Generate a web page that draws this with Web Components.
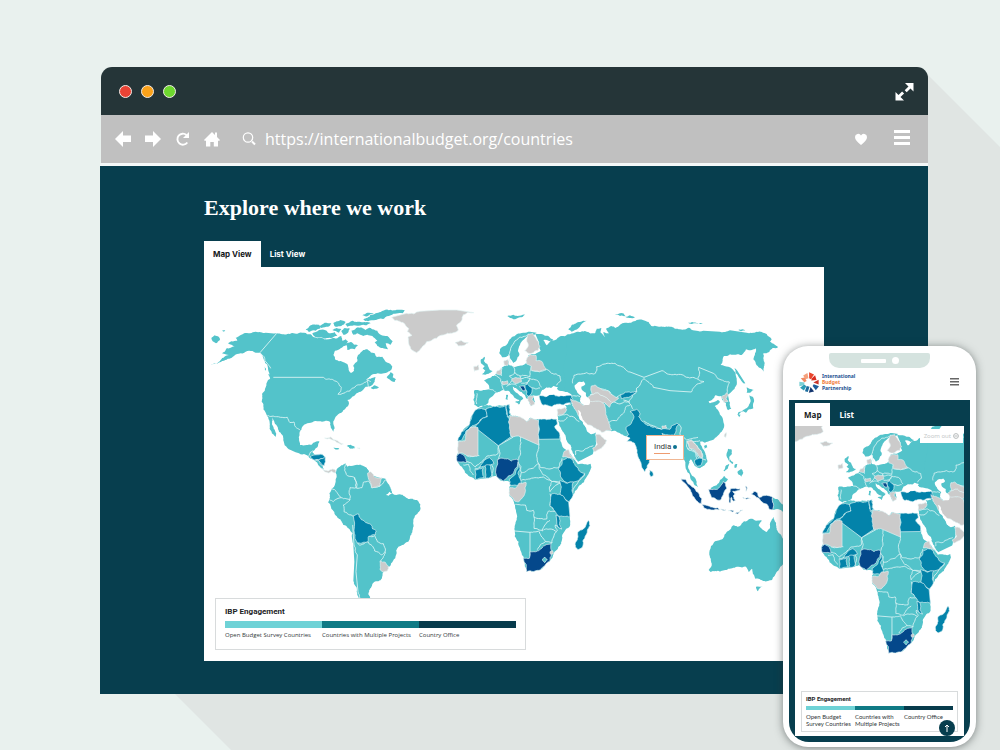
<!DOCTYPE html>
<html lang="en">
<head>
<meta charset="utf-8">
<title>Explore where we work</title>
<style>
  html, body { margin: 0; min-height: 100%; }
  body { background: #e9f1ee; font-family: Inter, "Open Sans", sans-serif; color: #1b2426; }
</style>
</head>
<body>
<desktop-scene>
  <browser-window url="https://internationalbudget.org/countries">
    <explore-section></explore-section>
  </browser-window>
  <phone-frame slot="phone"></phone-frame>
</desktop-scene>

<script>
/* ---------- map data: each region lists its points in its own grid (3 units per map unit) ---------- */
const TEAL = '#53c3ca', GREY = '#cbcbcb', BLUE = '#0383aa', NAVY = '#04488b';
const REGIONS = [
  { at: [204, 300], land: [
    [TEAL, '218,100 235,103 250,102 265,99 280,101 300,98 320,103 330,112 350,113 375,118 400,115 412,108 415,122 425,118 432,124 428,135 410,145 393,152 388,165 395,180 415,185 430,192 434,210 441,219 450,212 448,196 460,184 462,165 478,150 490,148 500,157 512,160 518,172 535,170 545,185 565,200 558,213 540,220 510,222 488,238 468,250 500,236 515,232 512,245 500,258 485,260 470,275 455,283 442,294 430,300 435,310 425,325 412,338 395,350 388,364 392,385 388,395 380,382 378,366 365,362 350,364 330,364 310,370 295,380 287,395 285,420 290,440 305,447 320,443 328,428 346,424 342,438 332,450 325,455 335,465 345,463 360,465 360,480 355,496 360,510 352,504 340,488 330,478 318,475 300,462 280,458 260,450 242,436 238,415 225,395 212,370 204,352 207,378 216,410 206,402 197,378 188,345 178,328 173,305 175,280 185,262 192,240 200,235 194,215 190,195 180,180 170,160 150,156 130,153 110,160 90,168 60,182 20,195 50,180 75,165 54,160 68,145 92,140 72,130 82,124 100,122 95,113 120,100 155,95 185,98'],
    [TEAL, '22,114 32,106 44,110 48,120 36,130 26,124'],[TEAL, '54,92 64,91 60,95'],
    [TEAL, '305,88 320,76 345,74 350,84 335,92 315,96'],
    [TEAL, '325,100 345,90 368,92 375,100 392,96 400,108 380,114 350,112 330,108'],
    [TEAL, '345,78 362,68 382,70 372,80 352,84'],[TEAL, '388,70 410,60 425,66 412,78 395,80'],
    [TEAL, '385,90 398,84 412,88 405,98'],[TEAL, '412,94 422,84 438,86 432,98 418,104'],
    [TEAL, '424,72 445,62 470,66 500,70 488,76 450,76 430,80'],
    [TEAL, '478,58 500,44 530,36 570,31 602,30 596,40 560,46 540,56 515,60 492,64'],
    [TEAL, '475,46 490,38 510,40 492,48'],
    [TEAL, '442,92 462,82 485,90 500,84 520,92 530,104 550,108 566,124 560,134 545,130 552,148 536,144 520,138 512,128 520,122 505,108 490,104 478,108 460,100 448,104'],
    [TEAL, '425,132 440,126 462,136 452,148 440,146 430,150'],
    [TEAL, '548,232 560,216 568,222 566,232 576,238 572,246 556,238'],
    [TEAL, '500,264 512,256 525,262 508,268'],
    [TEAL, '182,178 188,186 186,192'],[TEAL, '180,198 186,206 184,212'],
    [TEAL, '192,222 206,232 208,240 198,236'],
    [TEAL, '404,508 412,496 424,490 430,500 452,496 480,500 492,510 490,530 404,530'],
    [GREY, '362,414 380,411 400,422 418,432 412,434 395,424 378,416'],
    [TEAL, '428,438 440,434 454,442 440,446'],[TEAL, '395,444 406,445 402,449'],[GREY, '460,444 468,444 466,447'],
    [BLUE, '328,474 338,464 354,462 362,470 359,498 350,494 344,482 336,480']
  ], lines: ['218,100 168,158 180,170 190,190 200,205', '208,232 358,232 364,237 388,240 404,250 412,262 410,275 402,283 425,276 448,264 470,254 492,240 500,246', '492,240 496,262', '190,347 218,350 240,353 250,352 258,368 270,366 278,384 290,392', '312,472 318,458 326,452', '336,478 358,470'] },

  { at: [380, 300], land: [
    [GREY, '35,52 80,40 120,34 180,30 230,30 282,38 250,44 246,60 230,75 235,90 215,100 190,105 170,115 140,125 125,143 110,158 95,150 86,130 84,112 96,106 82,95 86,85 70,68 45,62'],
    [GREY, '225,128 245,122 265,128 255,135 235,138'],
    [TEAL, '358,160 360,148 375,138 385,125 395,112 410,103 430,98 450,95 470,98 460,106 446,104 434,116 420,135 414,152 418,165 410,180 400,189 390,175 388,165 366,172'],
    [TEAL, '466,102 480,102 505,108 520,118 508,124 490,120 500,136 512,122 530,118 545,108 580,108 610,102 610,300 585,300 560,280 540,276 525,262 500,264 486,272 480,284 460,286 465,305 455,318 446,300 436,288 425,276 410,266 398,260 404,274 420,287 430,294 425,300 416,314 418,300 400,287 385,272 370,270 355,276 345,280 330,294 325,308 310,318 295,322 283,315 280,300 284,285 282,272 310,270 328,268 326,255 312,242 330,234 345,226 352,218 365,204 378,197 378,180 386,184 388,196 400,200 430,195 440,188 446,176 446,165 465,163 482,152'],
    [TEAL, '382,48 400,44 412,48 435,44 420,52 400,58'],
    [TEAL, '565,88 575,75 600,66 620,62 602,76 585,90 575,95'],
    [TEAL, '303,178 314,170 312,184 322,192 328,208 338,213 326,221 306,223 316,212 308,205 314,198 303,190'],
    [GREY, '281,200 296,195 297,209 283,214'],[TEAL, '405,306 422,302 418,313'],[TEAL, '378,284 384,284 383,300 377,298'],
    [GREY, '434,152 444,140 440,120 444,104 458,100 468,115 480,140 474,152 455,160 442,158'],
    [GREY, '372,182 384,178 384,196 374,196'],
    [GREY, '438,182 450,164 468,166 468,182 485,184 498,210 478,216 455,212 454,198 440,192'],
    [GREY, '352,212 366,204 362,224 348,220'],[GREY, '366,244 382,242 384,252 368,254'],
    [GREY, '395,238 422,234 424,246 404,250'],[GREY, '444,290 462,288 456,298 464,312 452,318 444,302'],
    [NAVY, '418,260 432,258 436,272 426,270'],[BLUE, '434,256 442,252 454,262 456,276 448,290 440,284 438,270'],
    [BLUE, '478,286 496,290 520,283 550,288 574,286 578,310 550,315 530,313 515,320 488,315 480,300']
  ], sea: ['484,282 486,270 500,262 512,268 520,258 534,262 530,268 556,276 576,286 552,288 530,282 500,290'],
     lines: ['392,188 386,165 392,145 402,128 418,112 446,102', '291,280 290,312', '328,268 350,278', '345,226 362,238 366,258 372,270', '362,204 364,228', '400,200 404,220 388,228 398,238', '404,218 420,228 450,230 454,200', '398,240 385,256', '420,228 424,236 445,234 450,236 442,248 424,250', '450,236 470,240 484,262', '456,212 480,214 500,208 515,220 540,228 542,242 530,256', '452,262 480,264', '380,260 394,252 410,256', '440,252 448,240'] },

  { at: [570, 300], land: [
    [TEAL, '-10,104 10,100 25,95 50,95 75,100 80,86 94,84 92,98 104,112 100,96 118,100 108,86 124,78 136,84 150,74 165,68 200,60 236,66 244,78 270,80 300,80 330,88 360,84 400,92 450,95 480,91 530,98 560,95 590,102 605,118 600,125 624,142 608,144 598,156 580,160 584,190 580,215 560,196 550,178 555,160 558,145 546,150 528,148 515,165 480,163 462,168 452,195 475,200 490,210 500,235 498,258 486,274 474,286 480,308 484,326 474,331 468,310 456,298 452,288 436,286 426,300 416,304 420,310 444,300 450,306 434,318 446,334 456,350 462,372 455,395 440,410 420,422 405,428 390,425 380,440 394,455 408,475 405,495 390,505 378,500 370,490 362,478 352,490 350,500 342,470 328,450 325,420 300,405 200,415 165,408 150,400 125,394 80,385 30,355 0,310 -20,300'],
    [TEAL, '135,42 160,40 166,48 150,48'],[TEAL, '165,50 180,46 195,52 178,54'],[TEAL, '350,68 366,66 385,70 400,68 392,72 366,72'],[TEAL, '505,90 518,88 526,91 514,94'],
    [TEAL, '494,204 502,212 526,250 520,250 508,234 498,220'],
    [TEAL, '530,262 538,266 552,270 540,278 530,278'],[TEAL, '538,286 548,290 552,305 550,325 538,328 528,338 520,334 504,346 506,336 524,328 536,318 542,304'],[TEAL, '502,342 512,344 508,352'],
    [TEAL, '402,438 410,434 412,442 404,446'],[GREY, '464,402 470,398 468,412 463,410'],
    [GREY, '454,290 470,278 476,284 468,296 474,304 462,308'],
    [GREY, '64,258 75,255 92,266 114,272 122,282 138,292 146,294 126,308 118,322 104,308 84,304 60,306 54,292 66,282'],
    [GREY, '2,296 22,305 40,316 62,304 82,304 104,314 108,345 114,362 125,390 95,397 74,384 62,376 45,376 30,356 20,335 8,318'],
    [GREY, '352,424 364,420 378,434 392,452 398,472 386,466 374,444 360,444'],
    [GREY, '276,378 288,376 290,384 278,386'],
    [BLUE, '152,284 166,276 198,274 190,284 170,292 154,296'],
    [BLUE, '165,410 176,404 168,382 184,370 192,350 180,335 200,328 210,340 206,350 220,366 244,380 274,388 300,388 304,378 320,370 326,374 318,386 312,406 290,404 276,400 280,410 262,420 248,440 240,458 238,488 224,516 214,496 202,462 194,430 182,424 170,424 180,414']
  ], sea: ['14,256 26,246 40,244 46,252 34,260 36,270 48,278 48,288 60,300 58,314 42,316 30,302 34,288 20,272'],
     lines: ['8,250 12,226 50,218 76,220 80,200 116,190 152,198 180,216 222,232', '222,232 276,212 310,224 350,232 384,238 402,245 372,262 364,276 300,272 250,262 222,236', '384,236 386,202 430,220 450,238 478,246 472,278', '222,236 200,264 200,276 186,292 178,305', '66,258 92,266 120,276 138,294 152,284', '104,312 130,306 150,312 176,304 182,314', '110,370 140,362 160,340 170,318 182,314 190,328', '178,308 160,300', '326,372 334,384 330,408 350,420 384,412', '350,424 356,450 380,460 388,476', '0,285 30,290'],
     top: ['222,362 246,376 274,388', '60,284 84,278 104,290 124,306'] },

  { at: [300, 445], land: [
    [TEAL, '106,82 118,66 136,57 142,66 165,66 200,68 210,84 240,98 258,102 268,120 278,146 300,148 325,162 350,165 361,178 357,200 340,225 337,262 325,290 295,305 288,330 270,364 248,384 246,400 222,412 214,426 205,448 212,462 205,475 178,475 170,440 160,408 163,350 160,300 158,265 130,240 115,220 98,195 84,172 90,158 88,145 97,130 107,110'],
    [GREY, '203,84 212,80 226,98 246,98 240,122 214,128 210,108'],
    [GREY, '240,348 256,352 266,364 262,378 246,380 240,374'],
    [GREY, '64,70 74,76 86,78 98,72 108,78 104,84 94,78 86,84 74,80'],
    [TEAL, '20,0 48,0 42,12 30,20 40,28 40,34 30,32 10,26 0,20 0,0'],
    [BLUE, '30,36 42,30 62,28 76,36 73,62 64,58 54,44 40,44'],
    [TEAL, '54,50 66,60 70,72 60,66'],[TEAL, '100,8 114,10 108,14'],[TEAL, '145,0 160,4 165,10 148,10'],
    [BLUE, '160,212 176,207 184,224 212,238 218,252 229,258 226,270 206,274 204,290 190,292 172,294 162,256']
  ], sea: ['258,150 268,140 278,146 266,152'],
     lines: ['136,58 134,76 142,92 164,98 168,128 150,128 150,165 124,158 104,134 94,130', '164,98 170,130 186,128 190,112 206,108', '150,165 130,180 132,200 160,214', '124,158 100,170 88,164', '158,240 162,300 172,330 168,380 174,440 180,460', '206,274 224,272 232,290 250,296 256,318 244,330 224,318 204,290', '172,292 178,300 204,290', '256,320 242,348', '206,108 216,128 240,124 258,104'],
     top: ['46,44 60,42 74,38'] },

  { at: [450, 395], land: [
    [TEAL, '82,42 100,32 130,35 165,30 180,32 182,60 205,65 232,80 242,68 262,72 290,74 320,72 318,90 314,94 330,124 336,150 350,166 375,196 383,208 422,206 424,218 412,242 385,275 366,302 356,322 360,368 358,396 336,424 330,452 312,474 300,498 272,524 230,530 222,500 210,460 194,424 193,402 200,370 195,330 178,303 178,275 185,265 172,258 150,256 136,242 120,248 75,254 55,242 38,220 22,200 20,185 25,160 25,140 35,115 60,88 66,60'],
    [TEAL, '322,60 350,40 345,30 372,28 382,48 396,72 404,90 412,110 425,118 436,112 444,130 436,152 428,178 384,200 372,178 362,150 346,120 328,92'],
    [BLUE, '82,42 94,40 108,44 112,62 90,75 75,90 60,98 48,108 34,136 22,138 34,112 58,88 66,62'],
    [BLUE, '108,42 130,34 168,32 170,58 180,80 186,100 183,125 145,152 75,97 90,78 112,65'],
    [BLUE, '168,32 178,28 180,42 178,54 182,58 172,66'],
    [GREY, '180,62 205,65 230,80 242,68 266,78 266,150 210,125 186,126 178,100'],
    [BLUE, '266,72 290,74 318,72 322,88 314,94 330,132 267,133'],
    [GREY, '60,98 84,98 84,182 50,182 36,174 24,178 25,140 45,138 50,110'],
    [NAVY, '20,184 30,174 44,184 50,202 22,200'],
    [BLUE, '90,216 100,200 118,188 132,206 112,212'],[BLUE, '75,224 100,218 102,248 78,254'],[BLUE, '105,212 120,210 123,245 106,250'],[TEAL, '130,200 140,210 138,242 128,244'],
    [NAVY, '142,194 160,190 184,198 204,194 202,214 190,236 174,244 160,258 140,244'],
    [BLUE, '204,202 210,220 204,236 212,256 218,272 180,270 178,252 196,236'],
    [GREY, '180,278 196,280 208,264 228,262 226,290 206,320 194,318 178,298'],
    [GREY, '338,186 344,168 356,164 378,196 360,188'],
    [BLUE, '326,224 336,196 352,188 368,194 376,212 388,228 404,235 386,256 352,264 332,246'],
    [BLUE, '328,258 340,260 352,265 370,260 366,288 369,302 358,320 330,298 334,276'],
    [BLUE, '304,298 330,298 356,322 360,366 326,364 300,334'],[BLUE, '318,360 326,364 328,388 334,402 324,396'],
    [NAVY, '220,490 238,490 240,470 262,468 284,452 304,445 308,474 300,496 272,524 230,530'],
    [TEAL, '276,494 284,486 292,494 284,503'],[GREY, '300,470 308,467 310,476 302,478'],
    [BLUE, '415,376 420,392 408,420 396,458 384,464 376,456 378,440 384,426 384,410 400,402'],
    [GREY, '322,42 345,36 350,44 340,58 322,62'],
    [GREY, '436,118 452,120 470,136 460,154 432,170 428,160 442,148']
  ], sea: ['383,45 392,52 404,80 420,100 436,102 440,110 424,118 414,110 404,92 388,70'],
     lines: ['84,98 145,152 190,126', '145,152 144,176 110,184 88,206', '145,152 150,174 146,192', '212,126 210,160 206,194', '266,132 264,168 260,184 266,206 238,222 214,232', '204,200 214,232 210,254', '266,206 272,218 300,222 326,218 336,190', '266,206 280,240 300,256 330,262', '212,256 240,252 280,246 304,258', '304,262 300,290 330,264 ', '300,296 300,330 316,350', '50,182 88,182', '50,200 76,216 88,206', '40,210 56,208 60,226 70,240', '196,328 226,330 230,346 250,346 252,366 290,372 296,348 320,352', '252,366 252,400 276,406 300,376', '193,408 240,412 268,408', '240,412 240,490', '268,410 286,440 306,444 320,410 300,402 276,408', '322,408 316,390 336,402', '286,440 262,464', '322,62 350,58 388,80', '322,76 340,78 352,66', '376,180 376,168 400,168 430,152', '330,264 304,260', '404,236 384,262 366,300', '90,216 74,222', '124,208 126,244'] },

  { at: [600, 400], land: [
    [TEAL, '252,150 262,160 276,168 290,180 305,200 322,186 316,160 306,140 300,125 262,120'],
    [TEAL, '255,160 268,176 264,200 272,220 288,240 294,262 284,256 272,238 262,216 256,196'],
    [GREY, '262,124 278,124 292,140 306,164 306,174 294,166 284,150 268,144'],
    [BLUE, '284,180 308,176 304,194 290,199'],
    [BLUE, '149,210 158,216 160,226 153,231 148,222'],
    [NAVY, '243,236 256,238 284,266 296,280 306,296 304,312 292,304 276,282 262,258'],
    [NAVY, '306,314 326,318 352,323 358,330 336,330 312,324'],[NAVY, '362,327 378,329 372,332'],[NAVY, '385,332 402,333 398,336'],[NAVY, '406,340 422,330 428,330 412,342'],
    [TEAL, '332,264 350,256 360,240 372,228 384,238 374,248 364,260 350,270 334,270'],
    [NAVY, '326,268 340,268 352,268 366,252 370,244 376,250 380,266 370,284 362,300 348,298 334,292'],
    [NAVY, '386,282 392,266 420,266 420,270 398,274 406,282 400,288 406,302 400,304 394,292 392,308 387,308'],
    [NAVY, '436,258 442,264 438,274'],[NAVY, '428,293 440,294 452,296 440,298'],[NAVY, '454,282 462,274 472,278 478,292 500,286 518,292 518,330 508,328 500,312 484,304 476,294 462,286'],
    [TEAL, '518,292 536,300 550,314 566,330 550,336 536,328 518,330'],
    [TEAL, '384,146 394,148 396,162 388,170 386,182 380,160'],[TEAL, '390,178 400,188 398,192 388,184'],[TEAL, '404,194 412,192 410,202 404,204'],[TEAL, '370,212 386,192 388,194 374,214'],[TEAL, '412,216 424,206 430,218 424,230 414,222'],
    [TEAL, '333,438 345,424 370,414 380,396 400,376 412,380 420,378 432,364 452,356 470,362 486,362 476,376 500,396 510,384 514,362 521,350 528,368 534,396 546,412 560,430 566,460 552,488 532,514 516,540 490,543 466,536 458,520 456,506 446,516 438,500 415,500 385,506 360,515 332,516 326,510 335,490 328,465'],
    [TEAL, '468,560 488,559 474,574']
  ], lines: ['262,124 278,126 300,122', '306,174 318,180', '262,146 282,152 290,176'] }
];

/* Midpoint displacement: gives coasts and borders a natural ragged edge, the same for both sides of a shared edge. */
function noise(a, b) {
  const s = Math.sin((a[0] + b[0]) * 12.9898 + (a[1] + b[1]) * 78.233) * 43758.5453;
  return s - Math.floor(s) - 0.5;
}
function rough(a, b, depth) {
  const dx = b[0] - a[0], dy = b[1] - a[1];
  if (depth === 0 || Math.hypot(dx, dy) < 6) return [b];
  const swap = dx < 0 || (dx === 0 && dy < 0) ? -1 : 1;
  const n = noise(a, b) * 0.26 * swap;
  const m = [(a[0] + b[0]) / 2 - dy * n, (a[1] + b[1]) / 2 + dx * n];
  return [...rough(a, m, depth - 1), ...rough(m, b, depth - 1)];
}
function toPath(list, closed) {
  const pts = list.trim().split(/\s+/).map(p => p.split(',').map(Number));
  const out = [pts[0]];
  for (let i = 1; i < pts.length; i++) {
    const straight = Math.hypot(pts[i][0] - pts[i - 1][0], pts[i][1] - pts[i - 1][1]) > 44;
    out.push(...rough(pts[i - 1], pts[i], straight ? 0 : 3));
  }
  if (closed) out.push(...rough(pts[pts.length - 1], pts[0], 2));
  return 'M' + out.map(p => p[0].toFixed(1) + ' ' + p[1].toFixed(1)).join('L') + (closed ? 'Z' : '');
}
function mapMarkup() {
  const g = (r, inner) => `<g transform="translate(${r.at}) scale(.33333)">${inner}</g>`;
  const border = l => `<path class="l" d="${toPath(l, false)}"/>`;
  let base = '', sea = '', over = '', lines = '', top = '';
  for (const r of REGIONS) {
    base += g(r, r.land.filter(l => l[0] === TEAL).map(l => `<path fill="${l[0]}" d="${toPath(l[1], true)}"/>`).join(''));
    over += g(r, r.land.filter(l => l[0] !== TEAL || l[1].startsWith('276,494')).map(l => `<path class="c" fill="${l[0]}" d="${toPath(l[1], true)}"/>`).join(''));
    sea += g(r, (r.sea || []).map(l => `<path fill="#fff" d="${toPath(l, true)}"/>`).join(''));
    lines += g(r, r.lines.map(border).join(''));
    top += g(r, (r.top || []).map(border).join(''));
  }
  return base + lines + over + top + sea;
}

function define(name, html, setup) {
  const t = document.createElement('template');
  t.innerHTML = html;
  customElements.define(name, class extends HTMLElement {
    constructor() {
      super();
      this.attachShadow({ mode: 'open' }).append(t.content.cloneNode(true));
    }
    connectedCallback() { if (setup) setup(this, this.shadowRoot); }
  });
}

define('world-map', `
<style>
  :host { display: block; overflow: hidden; }
  svg { display: block; width: 100%; height: 100%; }
  .c { stroke: #e2f4f5; stroke-width: 2; stroke-linejoin: round; }
  .l { fill: none; stroke: #def4f5; stroke-width: 2.6; stroke-linejoin: round; }
</style>
<svg role="img" aria-label="World map of countries by engagement" preserveAspectRatio="none"></svg>`,
(el, root) => {
  const svg = root.querySelector('svg');
  svg.setAttribute('viewBox', el.getAttribute('view'));
  svg.innerHTML = mapMarkup();
});

define('engagement-legend', `
<style>
  :host { display: block; box-sizing: border-box; background: #fff; border: 1px solid #d8dbdc; color: #1d2426; }
  h2 { margin: 0 0 3px; font: var(--legend-title); }
  ul { list-style: none; margin: 0; padding: 0; display: grid; grid-template-columns: repeat(3, 1fr); }
  li { font: var(--legend-item); color: #33393b; }
  li::before { content: ""; display: block; height: var(--bar); margin-bottom: 3px; background: var(--tone); }
  .a { --tone: #6fd2d6; } .b { --tone: #0f7a85; } .c { --tone: #073b4c; }
</style>
<h2>IBP Engagement</h2>
<ul><li class="a">Open Budget Survey Countries</li><li class="b">Countries with Multiple Projects</li><li class="c">Country Office</li></ul>`);

define('tab-strip', `
<style>
  :host { display: block; }
  div { display: flex; }
  button { border: 0; margin: 0; background: none; color: #fff; padding: 0 9px; height: var(--tab-height); font: var(--tab-font); }
  button[aria-selected="true"] { background: #fff; color: #15191a; }
</style>
<div role="tablist"></div>`,
(el, root) => {
  root.querySelector('div').innerHTML = el.getAttribute('labels').split('|')
    .map((l, i) => `<button role="tab" aria-selected="${i === 0}">${l}</button>`).join('');
});

define('map-tooltip', `
<style>
  :host { display: block; box-sizing: border-box; background: #fff; border: 1px solid #f0b794; padding: 5px 7px 4px; font: 400 8px/12px Roboto, sans-serif; color: #33383a; }
  div { display: flex; align-items: center; gap: 2px; }
  div::after { content: ""; flex: none; width: 4px; height: 4px; border-radius: 50%; background: #0b7291; }
  hr { width: 16px; height: 1px; margin: 0; border: 0; background: #ee9c70; }
</style>
<div><slot></slot></div><hr>`);

define('explore-section', `
<style>
  :host { display: block; background: #073e4e; padding: 28px 104px 33px; }
  h1 { margin: 0 0 19px; color: #fff; font: 700 22px/28px "Liberation Serif", serif; }
  tab-strip { --tab-height: 26px; --tab-font: 700 8px/12px Inter, sans-serif; }
  .panel { position: relative; background: #fff; height: 394px; overflow: hidden; }
  world-map { height: 100%; }
  engagement-legend { position: absolute; left: 11px; bottom: 11px; width: 311px; height: 52px; padding: 7px 9px; --legend-title: 700 8px/12px Roboto, sans-serif; --legend-item: 400 6px/9px "Open Sans", sans-serif; --bar: 7px; }
  map-tooltip { position: absolute; left: 442px; top: 168px; width: 38px; height: 25px; }
</style>
<h1>Explore where we work</h1>
<tab-strip labels="Map View|List View"></tab-strip>
<div class="panel">
  <world-map view="204 267 620 394"></world-map>
  <map-tooltip>India</map-tooltip>
  <engagement-legend></engagement-legend>
</div>`);

define('browser-window', `
<style>
  :host { display: block; }
  header { display: flex; align-items: center; height: 48px; margin-left: 1px; padding: 0 14px 0 18px; box-sizing: border-box; background: #253538; border-radius: 11px 11px 0 0; }
  .dots { display: flex; gap: 9px; flex: 1; }
  .dots span { width: 11px; height: 11px; border: 1px solid #f3ece6; border-radius: 50%; }
  .red { background: #ea4335; } .amber { background: #fca31b; } .green { background: #6ed82f; }
  nav { display: flex; align-items: center; height: 48px; margin-left: 1px; padding: 0 18px 0 14px; box-sizing: border-box; background: #c0c0c0; color: #fff; }
  button { border: 0; padding: 0; margin: 0; background: none; display: block; color: #fff; }
  svg { display: block; }
  .keys { display: flex; gap: 14px; }
  .magnify { margin: 0 8px 0 22px; }
  input { flex: 1; min-width: 0; border: 0; padding: 0; background: none; color: #fff; font: 400 16px/24px "Open Sans", sans-serif; outline: 0; }
  .end { display: flex; gap: 26px; }
  .view { border-top: 3px solid #f4f8f8; }
</style>
<header>
  <div class="dots"><span class="red"></span><span class="amber"></span><span class="green"></span></div>
  <button aria-label="Full screen"><svg width="19" height="19" viewBox="0 0 19 19" fill="#fff"><path d="M10 1h8.500v8.500l-3-3-3.800 3.800-2-2 3.800-3.800z"/><path d="M9 18.500H.5V10l3 3 3.600-3.600 2 2L5.500 15z"/></svg></button>
</header>
<nav>
  <div class="keys">
    <button aria-label="Back"><svg width="16" height="18" viewBox="0 0 16 18" fill="#fff"><path d="M0 9l8-8v4.500h8v6.500H8V17z"/></svg></button>
    <button aria-label="Forward"><svg width="16" height="18" viewBox="0 0 16 18" fill="#fff"><path d="M16 9L8 1v4.500H0v6.500h8V17z"/></svg></button>
    <button aria-label="Reload"><svg width="15" height="18" viewBox="0 0 15 18" fill="none" stroke="#fff" stroke-width="1.900"><path d="M12.300 12.500A5.500 5.500 0 1 1 11.500 5"/><path d="M14 2v6H8z" fill="#fff" stroke="none"/></svg></button>
    <button aria-label="Home"><svg width="16" height="18" viewBox="0 0 16 18" fill="#fff"><path d="M8 2l3 3V2.500h2V7l3 3-1 1-1-.6V16.500H9.800V12H6.300v4.500H2V10.400L1 11l-1-1z"/></svg></button>
  </div>
  <svg class="magnify" width="15" height="18" viewBox="0 0 15 18" fill="none" stroke="#fff" stroke-width="1.200"><circle cx="6" cy="7.500" r="4.700"/><path d="M10 11.500l3 3" stroke-width="2"/></svg>
  <input type="text" aria-label="Address">
  <div class="end">
    <button aria-label="Favourite"><svg width="14" height="18" viewBox="0 0 14 18" fill="#fff"><path d="M7 15C3 11.500 1 10 1 7a3.200 3.200 0 0 1 6-1.500A3.200 3.200 0 0 1 13 7c0 3-2 4.500-6 8z"/></svg></button>
    <button aria-label="Menu"><svg width="16" height="18" viewBox="0 0 16 18" fill="#fff"><path d="M0 0h16v3H0zM0 6h16v3H0zM0 12h16v3H0z"/></svg></button>
  </div>
</nav>
<div class="view"><slot></slot></div>`,
(el, root) => { root.querySelector('input').value = el.getAttribute('url'); });

define('ibp-logo', `
<style>
  :host { display: flex; align-items: center; gap: 2px; font: 700 5px/6px "Noto Sans", sans-serif; color: #1d4f91; }
  svg { display: block; }
  span { display: block; }
  .o { color: #f0793a; }
</style>
<svg width="21" height="21" viewBox="0 0 60 60">
  <path fill="#f5a07c" d="M12 10l12-7 3 15-9 3z"/><path fill="#e8452c" d="M29 1l14 6-9 14-5-3z"/><path fill="#d92d20" d="M46 9l4 14-15 1 2-6z"/>
  <path fill="#f08a62" d="M5 18l11-2 6 10-7 3z"/><path fill="#c8352b" d="M56 22v14l-15-6z"/><path fill="#7bd0d4" d="M1 28l15 2-2 8-13 3z"/>
  <path fill="#2a9bb5" d="M3 45l12-9 6 5-7 12z"/><path fill="#1a6c9e" d="M17 55l5-15 8 2-5 15z"/><path fill="#14366f" d="M28 59l5-16 10 13z"/><path fill="#1e5c9b" d="M42 35l15 6-9 11-9-12z"/>
</svg>
<div><span>International</span><span class="o">Budget</span><span>Partnership</span></div>`);

define('phone-frame', `
<style>
  :host { display: flex; flex-direction: column; box-sizing: border-box; width: 193px; padding: 0 6px 5px; background: #fff; border-radius: 25px; box-shadow: 0 1px 8px rgba(40, 50, 50, .55); }
  .notch { align-self: center; display: flex; align-items: center; justify-content: center; gap: 6px; width: 101px; height: 15px; margin-top: 7px; background: #d5e3df; border-radius: 2px 2px 10px 10px; }
  .notch i { width: 25px; height: 4px; background: #fff; border-radius: 1px; }
  .notch b { width: 7px; height: 7px; background: #fff; border-radius: 50%; }
  header { display: flex; align-items: center; justify-content: space-between; height: 32px; padding: 0 11px 4px 10px; box-sizing: border-box; }
  button { border: 0; margin: 0; padding: 0; background: none; display: block; }
  svg { display: block; }
  .screen { background: #073e4e; padding: 3px 6px 6px; border-radius: 0 0 20px 20px; }
  tab-strip { --tab-height: 23px; --tab-font: 700 8px/12px "Open Sans", sans-serif; }
  .panel { position: relative; height: 310px; background: #fff; overflow: hidden; }
  world-map { height: 100%; }
  .zoom { position: absolute; right: 1px; top: 3px; display: flex; align-items: center; gap: 2px; height: 14px; padding: 0 4px; background: #fff; color: #c5c9ca; font: 400 6px/8px "Noto Sans", sans-serif; }
  engagement-legend { position: absolute; left: 6px; right: 6px; bottom: 4px; height: 41px; padding: 2px 4px; --legend-title: 700 6px/9px Roboto, sans-serif; --legend-item: 400 6px/7px Lato, sans-serif; --bar: 4px; }
  .up { position: absolute; right: 9px; bottom: 0; width: 16px; height: 16px; border-radius: 50%; background: #073e4e; display: grid; place-items: center; }
</style>
<div class="notch"><i></i><b></b></div>
<header><ibp-logo></ibp-logo><button aria-label="Menu"><svg width="9" height="8" viewBox="0 0 9 8" fill="#666"><path d="M0 0h9v1.500H0zM0 3h9v1.500H0zM0 6h9v1.500H0z"/></svg></button></header>
<div class="screen">
  <tab-strip labels="Map|List"></tab-strip>
  <div class="panel">
    <world-map view="429 324 176 338"></world-map>
    <button class="zoom">Zoom out <svg width="6" height="6" viewBox="0 0 6 6" fill="none" stroke="#b5babb"><circle cx="3" cy="3" r="2.400"/><path d="M1.500 3h3"/></svg></button>
    <engagement-legend></engagement-legend>
    <button class="up" aria-label="Back to top"><svg width="6" height="8" viewBox="0 0 6 8" fill="none" stroke="#fff"><path d="M3 8V1M1 3l2-2 2 2"/></svg></button>
  </div>
</div>`);

define('desktop-scene', `
<style>
  :host { display: block; position: relative; min-height: 750px; box-sizing: border-box; padding: 67px 72px 56px 100px; overflow: hidden; }
  .cast { position: absolute; inset: 0; background: #e0e5e3; clip-path: polygon(calc(100% - 72px) 75px, 100% 147px, 100% 100%, 231px 100%, 175px calc(100% - 56px)); }
  .main { position: relative; }
  ::slotted(phone-frame) { position: absolute; right: 24px; top: 346px; }
</style>
<div class="cast"></div>
<div class="main"><slot></slot></div>
<slot name="phone"></slot>`);
</script>
</body>
</html>
